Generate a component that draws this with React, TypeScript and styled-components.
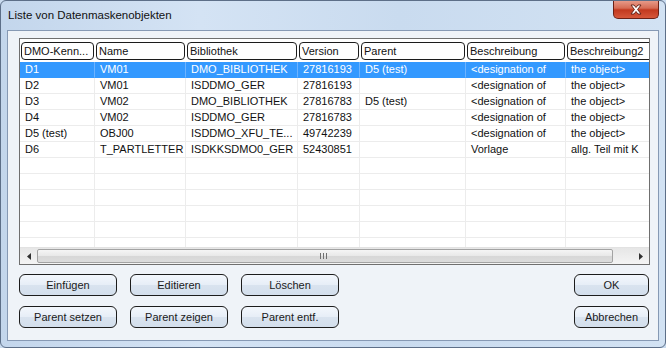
import styled, { createGlobalStyle } from 'styled-components';
import { FC } from 'react';

const GlobalStyle = createGlobalStyle`
  html, body {
    margin: 0;
    padding: 0;
    background: #c9dbef;
  }
  * {
    box-sizing: border-box;
  }
`;

type Column = { title: string; width: number };

const columns: Column[] = [
  { title: 'DMO-Kenn...', width: 76 },
  { title: 'Name', width: 91 },
  { title: 'Bibliothek', width: 112 },
  { title: 'Version', width: 62 },
  { title: 'Parent', width: 106 },
  { title: 'Beschreibung', width: 100 },
  { title: 'Beschreibung2', width: 120 },
];

const rows: string[][] = [
  ['D1', 'VM01', 'DMO_BIBLIOTHEK', '27816193', 'D5 (test)', '<designation of', 'the object>'],
  ['D2', 'VM01', 'ISDDMO_GER', '27816193', '', '<designation of', 'the object>'],
  ['D3', 'VM02', 'DMO_BIBLIOTHEK', '27816783', 'D5 (test)', '<designation of', 'the object>'],
  ['D4', 'VM02', 'ISDDMO_GER', '27816783', '', '<designation of', 'the object>'],
  ['D5 (test)', 'OBJ00', 'ISDDMO_XFU_TE...', '49742239', '', '<designation of', 'the object>'],
  ['D6', 'T_PARTLETTER', 'ISDKKSDMO0_GER', '52430851', '', 'Vorlage', 'allg. Teil mit K'],
];

const EMPTY_ROWS = 6;

const Window = styled.div`
  width: 666px;
  height: 348px;
  display: flex;
  flex-direction: column;
  border: 1px solid #5d6f88;
  border-radius: 6px;
  background: linear-gradient(90deg, #c3d6ec 0%, #d4e3f4 30%, #c9dbef 60%, #d2e2f3 100%);
  font-family: 'Liberation Sans', Arial, sans-serif;
  overflow: hidden;
`;

const TitleBar = styled.div`
  height: 29px;
  display: flex;
  align-items: flex-start;
  padding-left: 7px;
`;

const Title = styled.span`
  margin-top: 8px;
  font-size: 11.5px;
  color: #111;
`;

const CloseButton = styled.div`
  margin-left: auto;
  margin-right: 6px;
  margin-top: -1px;
  width: 46px;
  height: 19px;
  display: flex;
  align-items: center;
  justify-content: center;
  border: 1px solid #6b2116;
  border-top: none;
  border-radius: 0 0 5px 5px;
  background: linear-gradient(#e9a08f 0%, #d66c55 45%, #c2391f 55%, #d6573a 100%);
`;

const Client = styled.div`
  flex: 1;
  margin: 0 6px 6px 6px;
  display: flex;
  flex-direction: column;
  padding: 7px 8px 0 11px;
  border: 1px solid #8699b4;
  background: #eff3f8;
`;

const ListBox = styled.div`
  height: 227px;
  display: flex;
  flex-direction: column;
  border: 1px solid #6f6f6f;
  background: #fff;
  overflow: hidden;
`;

const HeaderRow = styled.div`
  display: flex;
  height: 18px;
  margin: 3px 0 2px 0;
  white-space: nowrap;
`;

const HeaderCell = styled.div<{ $width: number }>`
  flex: 0 0 ${(p) => p.$width}px;
  display: flex;
  align-items: center;
  padding: 0 2px;
  margin: 0 1px;
  border: 1px solid #1c1c1c;
  border-radius: 4px;
  font-size: 11px;
  color: #111;
  overflow: hidden;
  &:first-child {
    flex-basis: ${(p) => p.$width - 1}px;
  }
`;

const Body = styled.div`
  flex: 1;
  overflow: hidden;
`;

const Row = styled.div<{ $selected?: boolean }>`
  display: flex;
  height: 16px;
  white-space: nowrap;
  background: ${(p) => (p.$selected ? '#3399ff' : 'transparent')};
  color: ${(p) => (p.$selected ? '#fff' : '#111')};
`;

const Cell = styled.div<{ $width: number; $selected?: boolean }>`
  flex: 0 0 ${(p) => p.$width}px;
  height: 16px;
  line-height: 15px;
  padding-left: 5px;
  font-size: 11px;
  overflow: hidden;
  border-right: 1px solid ${(p) => (p.$selected ? '#6db3ff' : '#ececec')};
  border-bottom: 1px solid ${(p) => (p.$selected ? '#3399ff' : '#ececec')};
  &:first-child {
    flex-basis: ${(p) => p.$width - 1}px;
  }
`;

const ScrollBar = styled.div`
  height: 17px;
  display: flex;
  align-items: stretch;
  background: linear-gradient(#e6e6e6, #f4f4f4);
  border-top: 1px solid #e2e2e2;
`;

const ArrowButton = styled.div`
  flex: 0 0 17px;
  display: flex;
  align-items: center;
  justify-content: center;
`;

const Thumb = styled.div`
  flex: 0 0 576px;
  margin: 1px 0;
  display: flex;
  align-items: center;
  justify-content: flex-end;
  padding-right: 10px;
  border: 1px solid #a3a3a3;
  border-radius: 2px;
  background: linear-gradient(#f5f5f5 0%, #e8e8e8 50%, #d7d7d7 51%, #dcdcdc 100%);
`;

const Grip = styled.div`
  display: flex;
  gap: 2px;
  margin-right: 275px;
  & > span {
    width: 1px;
    height: 6px;
    background: #707070;
  }
`;

const Track = styled.div`
  flex: 1;
`;

const ButtonArea = styled.div`
  display: flex;
  justify-content: space-between;
  margin-top: 9px;
  padding-right: 1px;
`;

const ButtonGrid = styled.div`
  display: grid;
  grid-template-columns: repeat(3, 98px);
  column-gap: 13px;
  row-gap: 10px;
`;

const ButtonColumn = styled.div`
  display: flex;
  flex-direction: column;
  gap: 10px;
`;

const Button = styled.button<{ $width?: number }>`
  width: ${(p) => p.$width ?? 98}px;
  height: 22px;
  padding: 0;
  border: 1px solid #1c1c1c;
  border-radius: 6px;
  background: linear-gradient(#f3f7fc 0%, #e7eef7 48%, #d9e3ef 52%, #d3deec 100%);
  font-family: 'Liberation Sans', Arial, sans-serif;
  font-size: 11px;
  color: #1a1a1a;
`;

const CloseIcon: FC = () => (
  <svg width="14" height="11" viewBox="0 0 14 11">
    <path
      d="M2 1 L5 1 L7 3.5 L9 1 L12 1 L8.6 5.5 L12 10 L9 10 L7 7.5 L5 10 L2 10 L5.4 5.5 Z"
      fill="#fff"
      stroke="#5a1a10"
      strokeWidth="0.9"
      strokeLinejoin="round"
    />
  </svg>
);

const Arrow: FC<{ dir: 'left' | 'right' }> = ({ dir }) => (
  <svg width="4" height="7" viewBox="0 0 4 7">
    <path d={dir === 'left' ? 'M4 0 L0 3.5 L4 7 Z' : 'M0 0 L4 3.5 L0 7 Z'} fill="#303030" />
  </svg>
);

export default function App() {
  return (
    <>
      <GlobalStyle />
      <Window>
        <TitleBar>
          <Title>Liste von Datenmaskenobjekten</Title>
          <CloseButton>
            <CloseIcon />
          </CloseButton>
        </TitleBar>
        <Client>
          <ListBox>
            <HeaderRow>
              {columns.map((c) => (
                <HeaderCell key={c.title} $width={c.width - 2}>
                  {c.title}
                </HeaderCell>
              ))}
            </HeaderRow>
            <Body>
              {rows.map((r, i) => (
                <Row key={i} $selected={i === 0}>
                  {columns.map((c, j) => (
                    <Cell key={j} $width={c.width} $selected={i === 0}>
                      {r[j]}
                    </Cell>
                  ))}
                </Row>
              ))}
              {Array.from({ length: EMPTY_ROWS }).map((_, i) => (
                <Row key={`e${i}`}>
                  {columns.map((c, j) => (
                    <Cell key={j} $width={c.width} />
                  ))}
                </Row>
              ))}
            </Body>
            <ScrollBar>
              <ArrowButton>
                <Arrow dir="left" />
              </ArrowButton>
              <Thumb>
                <Grip>
                  <span />
                  <span />
                  <span />
                </Grip>
              </Thumb>
              <Track />
              <ArrowButton>
                <Arrow dir="right" />
              </ArrowButton>
            </ScrollBar>
          </ListBox>
          <ButtonArea>
            <ButtonGrid>
              <Button>Einfügen</Button>
              <Button>Editieren</Button>
              <Button>Löschen</Button>
              <Button>Parent setzen</Button>
              <Button>Parent zeigen</Button>
              <Button>Parent entf.</Button>
            </ButtonGrid>
            <ButtonColumn>
              <Button $width={75}>OK</Button>
              <Button $width={75}>Abbrechen</Button>
            </ButtonColumn>
          </ButtonArea>
        </Client>
      </Window>
    </>
  );
}
